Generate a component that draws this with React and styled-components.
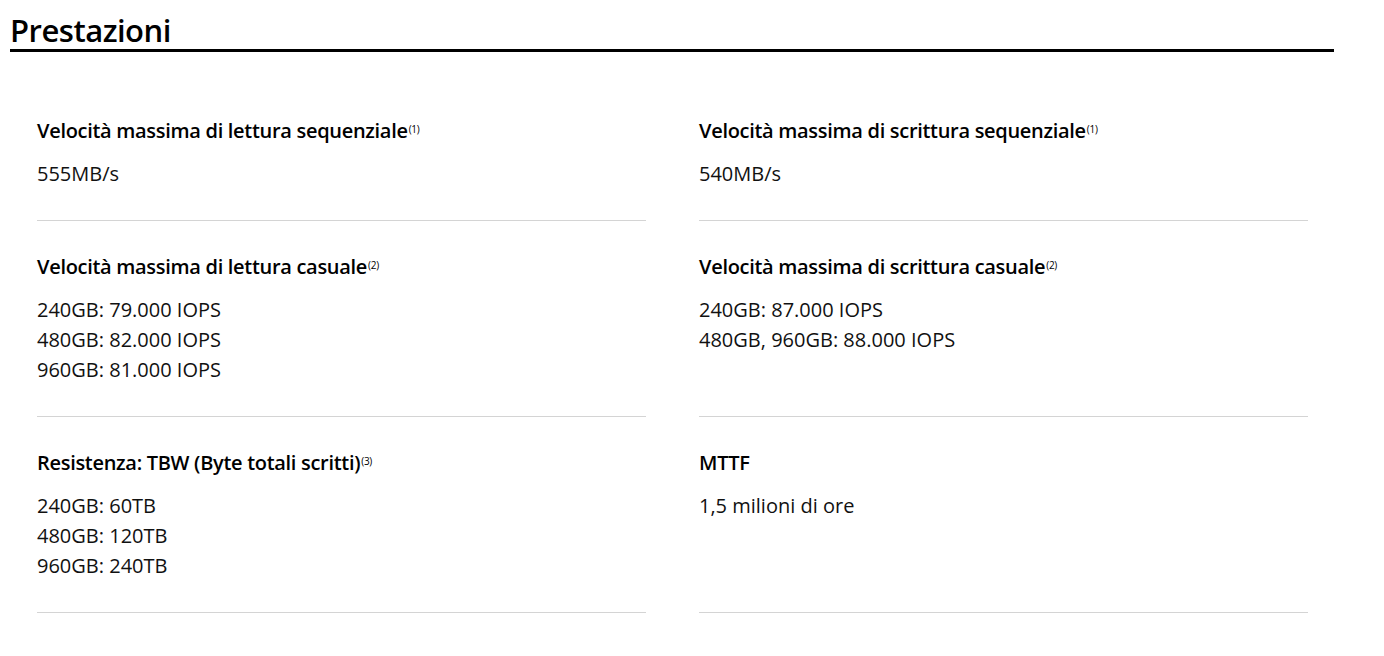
import React from 'react';
import styled, { createGlobalStyle } from 'styled-components';

const GlobalStyle = createGlobalStyle`
  body {
    margin: 0;
    background: #fff;
    font-family: 'Open Sans', 'Noto Sans', sans-serif;
    color: #000;
  }
`;

const Section = styled.section`
  width: 1324px;
  padding: 12px 0 0 10px;
`;

const Title = styled.h2`
  margin: 0;
  font-size: 31px;
  font-weight: 600;
  line-height: 36px;
  padding-bottom: 1px;
  border-bottom: 3px solid #000;
  letter-spacing: -0.5px;
`;

const Grid = styled.div`
  display: grid;
  grid-template-columns: 609px 609px;
  column-gap: 53px;
  margin: 33px 0 0 27px;
`;

const Cell = styled.div`
  padding: 34px 0 31px;
  border-bottom: 1px solid #d4d4d4;
`;

const Label = styled.h3`
  margin: 0 0 16px;
  font-size: 20px;
  font-weight: 600;
  line-height: 24px;
  letter-spacing: -0.3px;

  sup {
    font-size: 10px;
    font-weight: 400;
    vertical-align: 5px;
    line-height: 0;
    margin-left: 1px;
  }
`;

const Value = styled.div`
  font-size: 20px;
  line-height: 30px;
  color: #111;
`;

const specs = [
  { label: 'Velocità massima di lettura sequenziale', note: 1, values: ['555MB/s'] },
  { label: 'Velocità massima di scrittura sequenziale', note: 1, values: ['540MB/s'] },
  {
    label: 'Velocità massima di lettura casuale',
    note: 2,
    values: ['240GB: 79.000 IOPS', '480GB: 82.000 IOPS', '960GB: 81.000 IOPS'],
  },
  {
    label: 'Velocità massima di scrittura casuale',
    note: 2,
    values: ['240GB: 87.000 IOPS', '480GB, 960GB: 88.000 IOPS'],
  },
  {
    label: 'Resistenza: TBW (Byte totali scritti)',
    note: 3,
    values: ['240GB: 60TB', '480GB: 120TB', '960GB: 240TB'],
  },
  { label: 'MTTF', values: ['1,5 milioni di ore'] },
];

export default function App() {
  return (
    <>
      <GlobalStyle />
      <Section>
        <Title>Prestazioni</Title>
        <Grid>
          {specs.map(({ label, note, values }) => (
            <Cell key={label}>
              <Label>
                {label}
                {note && <sup>({note})</sup>}
              </Label>
              {values.map((v) => (
                <Value key={v}>{v}</Value>
              ))}
            </Cell>
          ))}
        </Grid>
      </Section>
    </>
  );
}
